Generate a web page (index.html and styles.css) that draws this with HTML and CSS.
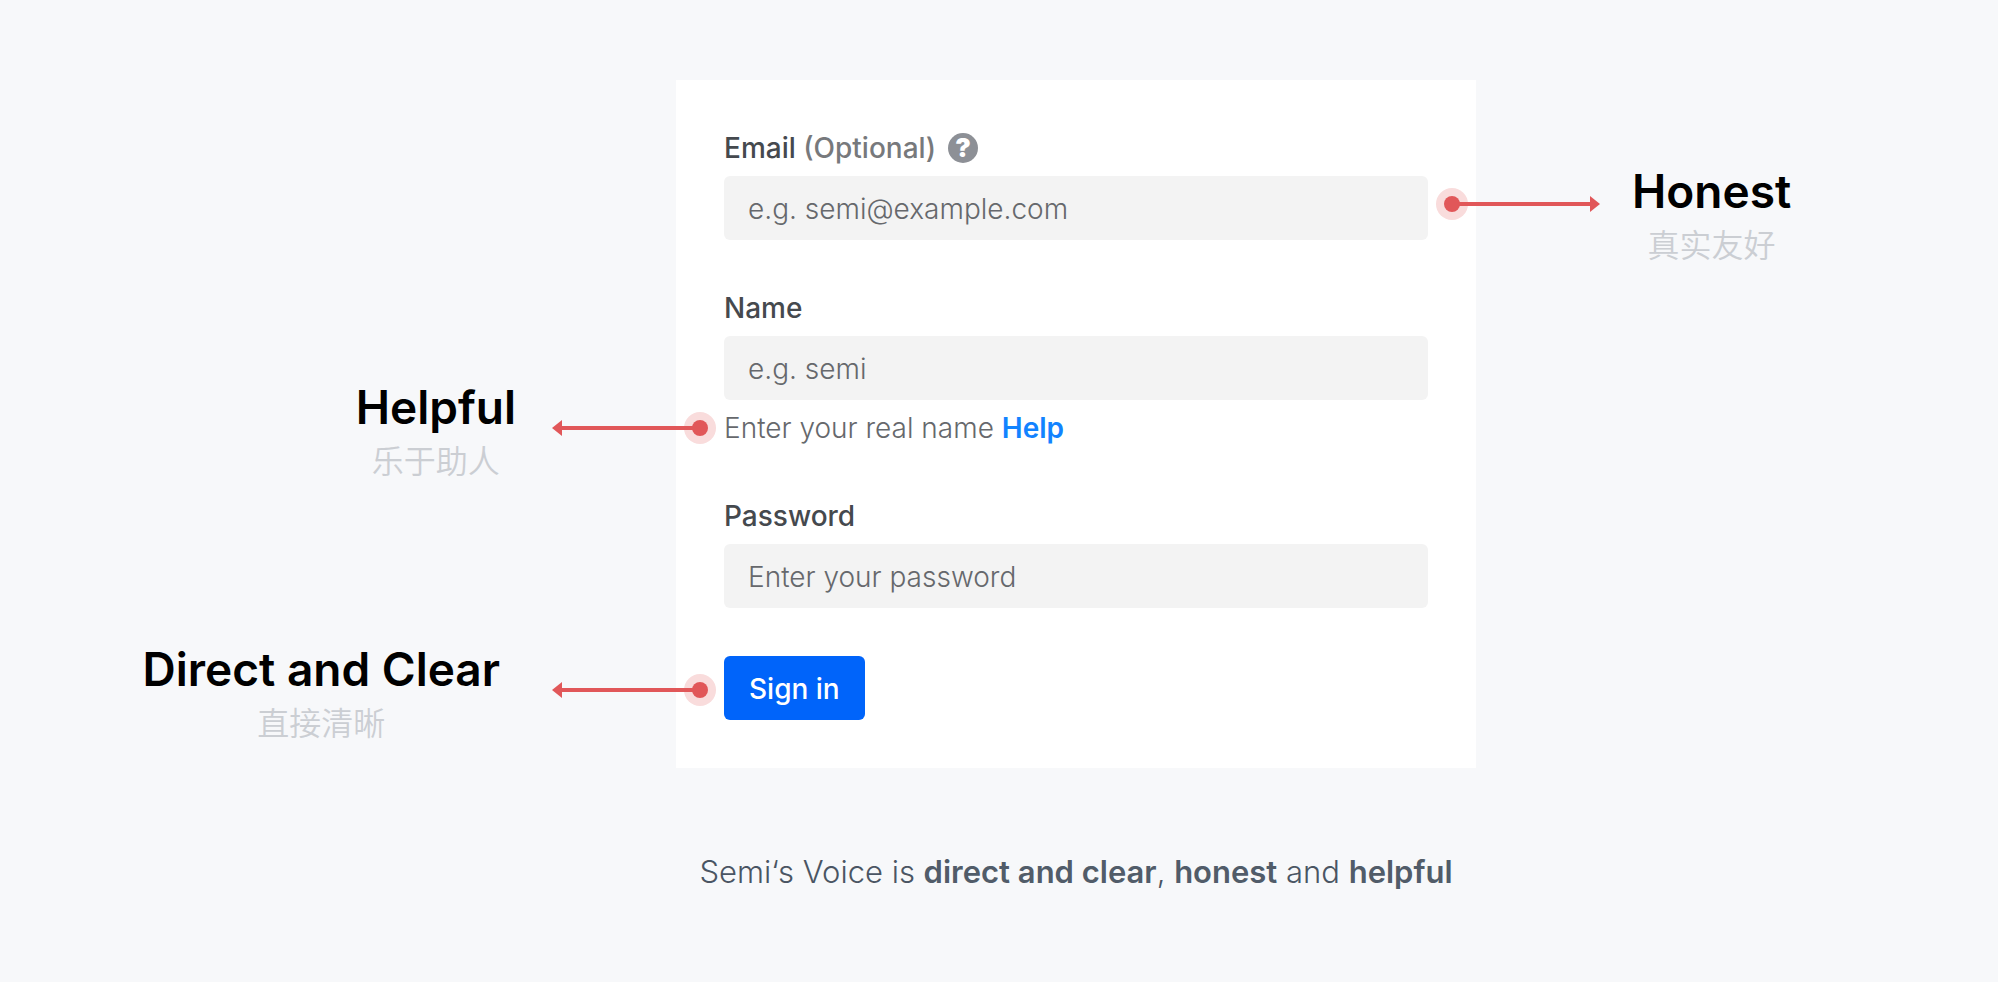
FILE: index.html
```html
<!DOCTYPE html>
<html lang="en">
<head>
    <meta charset="UTF-8">
    <meta name="viewport" content="width=device-width, initial-scale=1.0">
    <title>Semi's Voice</title>
    <link rel="stylesheet" href="styles.css">
</head>
<body>
    <main class="page">
        <form class="card">
            <div class="field">
                <div class="label-row">
                    <label class="label" for="email">Email <span class="optional">(Optional)</span></label>
                    <button type="button" class="help-icon" aria-label="About email">?</button>
                </div>
                <div class="anchor">
                    <input class="input" type="email" id="email" placeholder="e.g. semi@example.com">
                    <div class="callout callout-right">
                        <svg class="arrow" viewBox="0 0 164 32" aria-hidden="true">
                            <circle class="halo" cx="16" cy="16" r="16"/>
                            <circle cx="16" cy="16" r="8"/>
                            <path d="M16 14H154V8L164 16L154 24V18H16Z"/>
                        </svg>
                        <div class="callout-text">
                            <h2 class="title">Honest</h2>
                            <p class="subtitle" lang="zh">真实友好</p>
                        </div>
                    </div>
                </div>
            </div>

            <div class="field">
                <div class="label-row">
                    <label class="label" for="name">Name</label>
                </div>
                <input class="input" type="text" id="name" placeholder="e.g. semi">
                <div class="anchor hint">
                    Enter your real name <a class="link" href="#">Help</a>
                    <div class="callout callout-left">
                        <div class="callout-text">
                            <h2 class="title">Helpful</h2>
                            <p class="subtitle" lang="zh">乐于助人</p>
                        </div>
                        <svg class="arrow" viewBox="0 0 164 32" aria-hidden="true">
                            <circle class="halo" cx="148" cy="16" r="16"/>
                            <circle cx="148" cy="16" r="8"/>
                            <path d="M148 14H10V8L0 16L10 24V18H148Z"/>
                        </svg>
                    </div>
                </div>
            </div>

            <div class="field">
                <div class="label-row">
                    <label class="label" for="password">Password</label>
                </div>
                <input class="input" type="password" id="password" placeholder="Enter your password">
            </div>

            <div class="anchor">
                <button type="submit" class="submit">Sign in</button>
                <div class="callout callout-left callout-button">
                    <div class="callout-text">
                        <h2 class="title">Direct and Clear</h2>
                        <p class="subtitle" lang="zh">直接清晰</p>
                    </div>
                    <svg class="arrow" viewBox="0 0 164 32" aria-hidden="true">
                        <circle class="halo" cx="148" cy="16" r="16"/>
                        <circle cx="148" cy="16" r="8"/>
                        <path d="M148 14H10V8L0 16L10 24V18H148Z"/>
                    </svg>
                </div>
            </div>
        </form>

        <p class="caption">Semi‘s Voice is <strong>direct and clear</strong>, <strong>honest</strong> and <strong>helpful</strong></p>
    </main>
</body>
</html>
```
FILE: styles.css
```css
* {
    box-sizing: border-box;
}

body {
    margin: 0;
    min-height: 100vh;
    background: #f7f8fa;
    font-family: Inter, "Noto Sans CJK SC", sans-serif;
    font-size: 28px;
    line-height: 40px;
    color: #45494e;
}

h2, p {
    margin: 0;
}

/* The card sits a little right of the middle */
.page {
    display: grid;
    grid-template-columns: minmax(0, 676fr) minmax(0, 800px) minmax(0, 522fr);
    row-gap: 80px;
    padding: 80px 0;
}

.card {
    grid-column: 2;
    display: flex;
    flex-direction: column;
    gap: 48px;
    padding: 48px;
    background: #ffffff;
}

.field {
    display: flex;
    flex-direction: column;
    gap: 8px;
}

.label-row {
    display: flex;
    align-items: center;
    gap: 12px;
}

.label {
    font-weight: 500;
}

.optional {
    color: #77797c;
}

.help-icon {
    width: 30px;
    height: 30px;
    padding: 0;
    border: none;
    border-radius: 50%;
    background: #8d9096;
    color: #ffffff;
    font: 900 26px/30px Inter, sans-serif;
    text-align: center;
}

.input {
    display: block;
    width: 100%;
    height: 64px;
    padding: 2px 24px 0;
    border: none;
    border-radius: 6px;
    background: #f3f3f3;
    color: #45494e;
    font: inherit;
    font-weight: 300;
}

.input::placeholder {
    color: #66686c;
    opacity: 1;
}

.hint {
    color: #66686c;
    font-weight: 300;
}

.link {
    color: #1283ff;
    font-weight: 600;
    text-decoration: none;
}

.submit {
    display: block;
    height: 64px;
    padding: 2px 25px 0;
    border: none;
    border-radius: 6px;
    background: #0064fa;
    color: #ffffff;
    font: inherit;
    font-weight: 500;
}

/* Callouts hang outside the element they point at */
.anchor {
    position: relative;
}

.callout {
    position: absolute;
    display: flex;
    align-items: flex-start;
    text-align: center;
    white-space: nowrap;
}

.callout-right {
    left: 100%;
    top: -16px;
    gap: 32px;
    padding-left: 8px;
}

.callout-left {
    right: 100%;
    top: -32px;
    gap: 36px;
    padding-right: 8px;
}

.callout-button {
    top: -18px;
    gap: 52px;
}

.title {
    font-size: 46px;
    line-height: 62px;
    font-weight: 600;
    color: #000000;
}

.subtitle {
    font-size: 32px;
    line-height: 48px;
    font-weight: 350;
    color: #cbced3;
}

.arrow {
    width: 164px;
    height: 32px;
    margin-top: 36px;
    fill: #e15759;
}

.callout-right .arrow {
    margin-top: 28px;
}

.halo {
    fill: #f9dcdc;
}

.caption {
    grid-column: 2;
    font-size: 31px;
    font-weight: 300;
    line-height: 48px;
    text-align: center;
    white-space: nowrap;
    color: #4a5563;
}

.caption strong {
    font-weight: 600;
    color: #515c69;
}
```
